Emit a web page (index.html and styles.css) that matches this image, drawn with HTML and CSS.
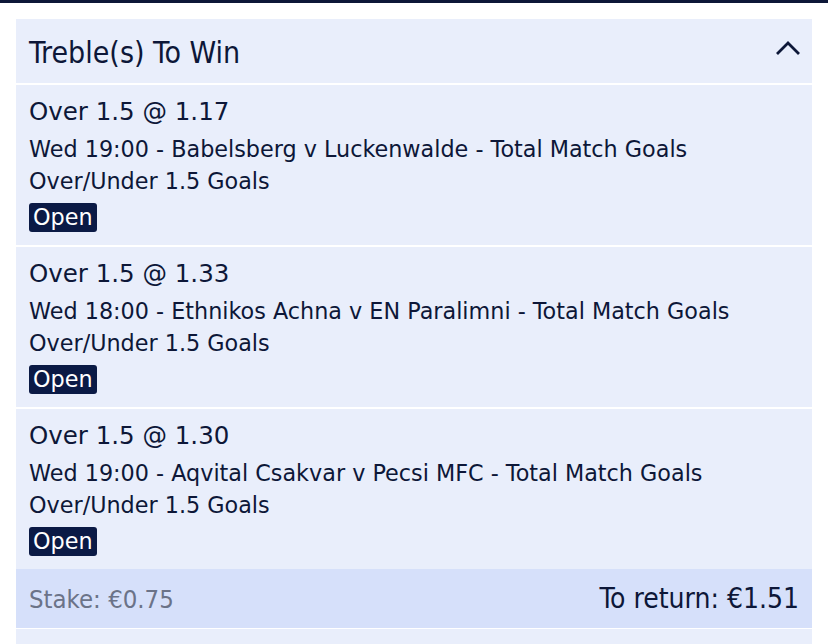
FILE: index.html
```html
<!DOCTYPE html>
<html lang="en">
<head>
  <meta charset="UTF-8" />
  <meta name="viewport" content="width=device-width, initial-scale=1.0" />
  <title>Treble(s) To Win</title>
  <link rel="stylesheet" href="styles.css">
</head>
<body>
  <div class="topbar"></div>
  <div class="betslip">
    <div class="slip-header">
      <span class="slip-title">Treble(s) To Win</span>
      <svg class="chevron" width="26" height="16" viewBox="0 0 26 16">
        <path d="M2 14 L13 3 L24 14" fill="none" stroke="#0d1738" stroke-width="2.8" />
      </svg>
    </div>

    <div class="selection">
      <div class="pick">Over 1.5 @ 1.17</div>
      <div class="event">Wed 19:00 - Babelsberg v Luckenwalde - Total Match Goals</div>
      <div class="market">Over/Under 1.5 Goals</div>
      <span class="status">Open</span>
    </div>

    <div class="selection">
      <div class="pick">Over 1.5 @ 1.33</div>
      <div class="event">Wed 18:00 - Ethnikos Achna v EN Paralimni - Total Match Goals</div>
      <div class="market">Over/Under 1.5 Goals</div>
      <span class="status">Open</span>
    </div>

    <div class="selection">
      <div class="pick">Over 1.5 @ 1.30</div>
      <div class="event">Wed 19:00 - Aqvital Csakvar v Pecsi MFC - Total Match Goals</div>
      <div class="market">Over/Under 1.5 Goals</div>
      <span class="status">Open</span>
    </div>

    <div class="slip-footer">
      <span class="stake">Stake: €0.75</span>
      <span class="return">To return: €1.51</span>
    </div>
    <div class="slip-next"></div>
  </div>
</body>
</html>
```

FILE: styles.css
```css
body {
  margin: 0;
  background: #fff;
  font-family: 'DejaVu Sans', Verdana, sans-serif;
  color: #0d1738;
}
.topbar {
  height: 3px;
  background: #0d1738;
}
.betslip {
  margin: 16px 16px 0;
}
.slip-header {
  display: flex;
  align-items: center;
  justify-content: space-between;
  height: 64px;
  padding: 0 11px 0 13px;
  background: #e9eefb;
  margin-bottom: 2px;
}
.slip-title {
  font-family: 'DejaVu Sans Condensed', 'DejaVu Sans', sans-serif;
  font-size: 30px;
  margin-top: 2px;
}
.chevron {
  margin-top: -6px;
}
.selection {
  height: 160px;
  box-sizing: border-box;
  padding: 12px 13px 0;
  background: #e9eefb;
  margin-bottom: 2px;
  font-size: 22.3px;
}
.pick {
  font-size: 24.5px;
  line-height: 30px;
}
.event {
  margin-top: 6px;
  line-height: 32px;
}
.market {
  line-height: 32px;
}
.status {
  display: inline-block;
  margin-top: 6px;
  padding: 0 4px;
  background: #0b1a45;
  color: #fff;
  border-radius: 3px;
  line-height: 29px;
}
.slip-footer {
  display: flex;
  align-items: center;
  justify-content: space-between;
  height: 59px;
  padding: 0 13px;
  margin-top: -2px;
  background: #d6e0fa;
  font-family: 'DejaVu Sans Condensed', 'DejaVu Sans', sans-serif;
  font-size: 28px;
}
.stake {
  font-size: 25.5px;
  color: #6b7388;
}
.slip-next {
  height: 20px;
  margin-top: 1px;
  background: #e9eefb;
}
```
